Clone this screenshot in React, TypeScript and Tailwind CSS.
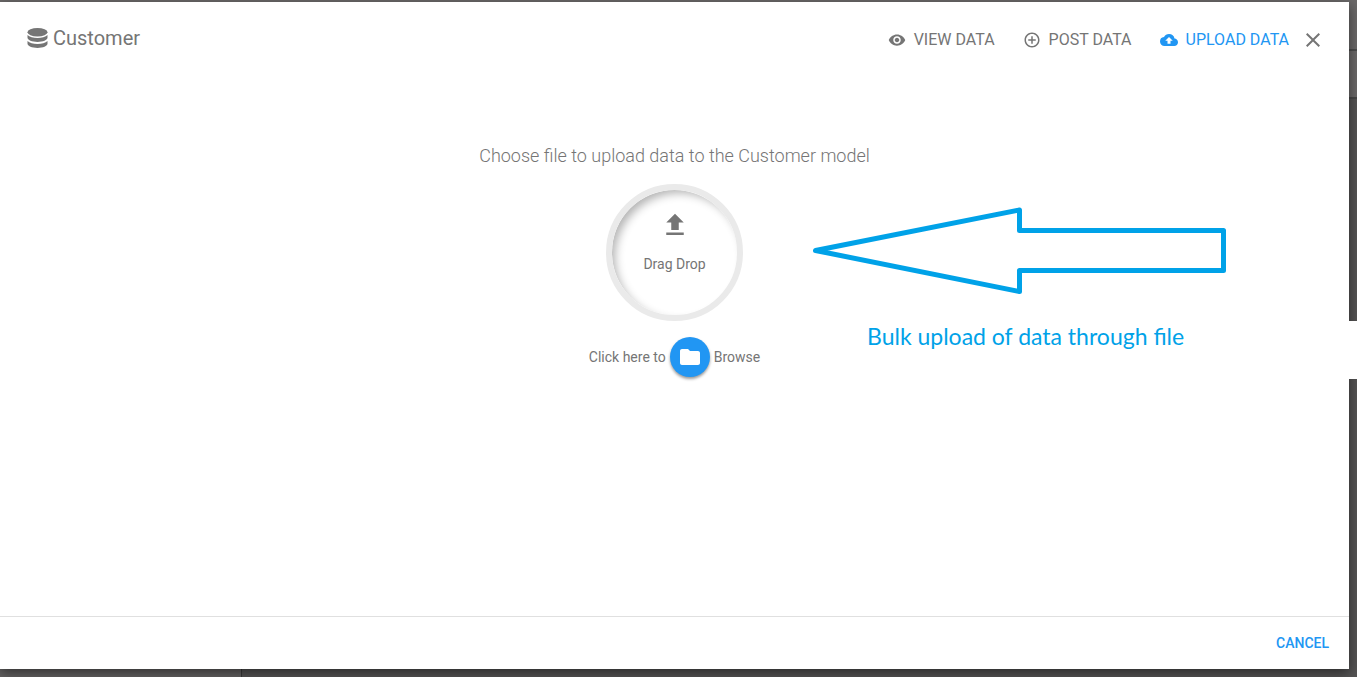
import React from "react";
import {
  MdVisibility,
  MdAddCircleOutline,
  MdBackup,
  MdClose,
  MdFolder,
} from "react-icons/md";

function DatabaseIcon() {
  return (
    <svg width="21" height="20" viewBox="0 0 21 20" fill="currentColor" aria-hidden="true">
      <ellipse cx="10.500" cy="4.200" rx="10" ry="4.200" />
      <path d="M.5 7C2.500 9 6.200 10 10.500 10S18.500 9 20.500 7V9.700C20.500 11.900 16 13.900 10.500 13.900S.5 11.900.5 9.700Z" />
      <path d="M.5 12.900C2.500 14.900 6.200 15.900 10.500 15.900S18.500 14.900 20.500 12.900V15.800C20.500 18 16 20 10.500 20S.5 18 .5 15.800Z" />
    </svg>
  );
}

function UploadIcon() {
  return (
    <svg width="30" height="30" viewBox="0 0 24 24" fill="currentColor" aria-hidden="true">
      <path d="M9 16h6v-6h4l-7-7-7 7h4zm-4 2h14v2H5z" />
    </svg>
  );
}

const actions = [
  { label: "VIEW DATA", Icon: MdVisibility, active: false },
  { label: "POST DATA", Icon: MdAddCircleOutline, active: false },
  { label: "UPLOAD DATA", Icon: MdBackup, active: true },
];

function Backdrop() {
  return (
    <div className="absolute inset-0 flex flex-col bg-[#555454]" aria-hidden="true">
      <div className="h-[51px] border-b-2 border-[#4c4c4c] bg-[#6b6969]" />
      <div className="h-12 border-b-2 border-[#484848] bg-[#6b6969]" />
      <div className="flex grow">
        <div className="w-[242px] border-r border-[#383838] bg-[#646262]" />
      </div>
    </div>
  );
}

function Annotation() {
  return (
    <div className="pointer-events-none absolute top-[206px] right-0 w-[544px] text-[#00a2e8]">
      <svg width="414" height="90" viewBox="0 0 414 90" fill="none" stroke="currentColor" strokeWidth="5" aria-hidden="true">
        <path d="M2.500 44.500L206.500 4V24.500H410.500V64.500H206.500V85.500Z" strokeLinejoin="round" />
      </svg>
      <p className="mt-[25px] h-[58px] bg-white pl-[54px] font-[Lato,sans-serif] text-[23px] leading-[30px]">
        Bulk upload of data through file
      </p>
    </div>
  );
}

export default function App() {
  return (
    <div className="relative flex min-h-screen flex-col pt-0.5 pr-2 pb-2 font-[Roboto,sans-serif] text-[#757575]">
      <Backdrop />
      <main className="relative flex grow flex-col bg-white shadow-[0_4px_12px_rgba(0,0,0,0.5)]">
        <header className="flex items-start justify-between pt-[22px] pr-6 pl-[27px]">
          <h1 className="flex items-center gap-[5px] text-xl">
            <DatabaseIcon />
            Customer
          </h1>
          <nav className="flex items-center gap-7 pt-1">
            {actions.map(({ label, Icon, active }) => (
              <button
                key={label}
                type="button"
                className={active ? "flex items-center gap-2 text-[#2196f3]" : "flex items-center gap-2"}
              >
                <Icon size={18} />
                {label}
              </button>
            ))}
            <button type="button" aria-label="Close" className="-ml-4">
              <MdClose size={24} />
            </button>
          </nav>
        </header>

        <section className="flex grow flex-col items-center pt-[90px] text-sm">
          <h2 className="text-lg font-light">Choose file to upload data to the Customer model</h2>
          <button
            type="button"
            className="mt-3.5 flex size-[137px] flex-col items-center rounded-full border-[6px] border-[#eaeaea] pt-5 shadow-[inset_5px_5px_10px_-2px_rgba(0,0,0,0.3)]"
          >
            <UploadIcon />
            <span className="mt-3.5">Drag Drop</span>
          </button>
          <div className="mt-4 flex items-center gap-1">
            Click here to
            <button
              type="button"
              aria-label="Browse files"
              className="flex size-10 items-center justify-center rounded-full bg-[#2196f3] text-white shadow-[0_2px_3px_rgba(0,0,0,0.4)]"
            >
              <MdFolder size={24} />
            </button>
            Browse
          </div>
        </section>

        <footer className="flex justify-end border-t border-[#e0e0e0] px-5 py-4">
          <button type="button" className="text-sm font-medium text-[#2196f3]">
            CANCEL
          </button>
        </footer>
      </main>
      <Annotation />
    </div>
  );
}
